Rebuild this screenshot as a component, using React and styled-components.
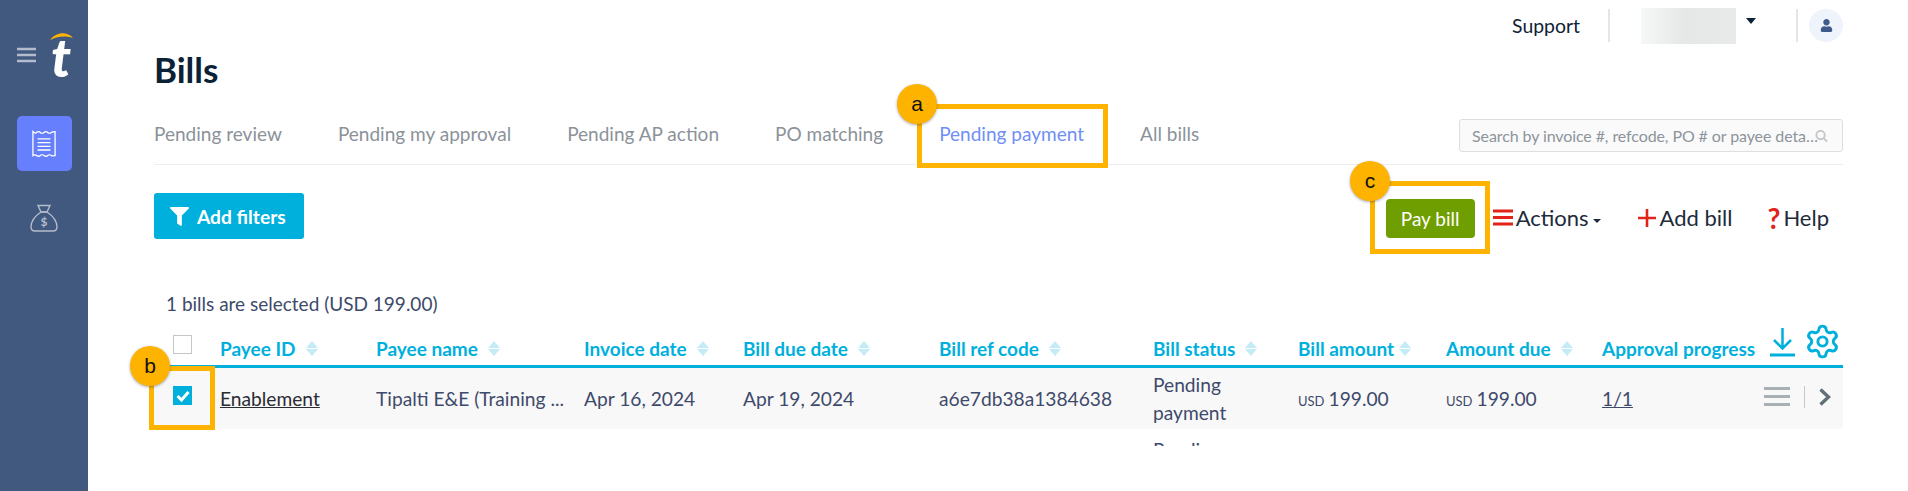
import React from 'react';
import styled, { createGlobalStyle } from 'styled-components';
import { Settings } from 'lucide-react';
import { FaFilter, FaUser } from 'react-icons/fa';

const GlobalStyle = createGlobalStyle`
  html, body {
    margin: 0;
    padding: 0;
    background: #fff;
    font-family: Lato, "Liberation Sans", sans-serif;
  }
`;

const Page = styled.div`
  position: relative;
  display: flex;
  width: 1908px;
  height: 491px;
  overflow: hidden;
`;

const Sidebar = styled.aside`
  flex: 0 0 88px;
  display: flex;
  flex-direction: column;
  align-items: center;
  background: #41587f;
`;

const Brand = styled.div`
  display: flex;
  align-items: center;
  gap: 14px;
  height: 44px;
  margin-top: 33px;
  margin-left: 5px;
`;

const NavButton = styled.div`
  display: flex;
  align-items: center;
  justify-content: center;
  width: 55px;
  height: 55px;
  margin-top: ${(p) => p.$top}px;
  border-radius: 5px;
  background: ${(p) => (p.$active ? '#667ffc' : 'transparent')};
`;

const Main = styled.main`
  flex: 1;
  min-width: 0;
  padding: 0 65px 0 66px;
`;

const TopBar = styled.div`
  display: flex;
  align-items: center;
  justify-content: flex-end;
  height: 33px;
  padding-top: 9px;
`;

const SupportLink = styled.span`
  margin-right: 28px;
  margin-top: -1px;
  font-size: 19.4px;
  color: #0e2236;
`;

const TopDivider = styled.div`
  width: 2px;
  height: 33px;
  background: #e3e5e8;
`;

const AccountBlur = styled.div`
  width: 95px;
  height: 36px;
  margin-left: 31px;
  background: linear-gradient(90deg, #f6f7f7, #e6e8e8 45%, #e8eaea);
`;

const Caret = styled.div`
  width: 0;
  height: 0;
  margin: -9px 40px 0 10px;
  border-left: 5px solid transparent;
  border-right: 5px solid transparent;
  border-top: 6px solid #0e2236;
`;

const Avatar = styled.div`
  display: flex;
  align-items: center;
  justify-content: center;
  width: 34px;
  height: 33px;
  margin-left: 11px;
  border-radius: 50%;
  background: #eef3fc;
  color: #3f5a8a;
  font-size: 13px;
`;

const Title = styled.h1`
  margin: 7px 0 0;
  font-size: 35px;
  line-height: 40px;
  font-weight: 700;
  color: #0b2135;
`;

const TabRow = styled.div`
  display: flex;
  align-items: center;
  gap: 56px;
  height: 75px;
  border-bottom: 1px solid #eceef0;
`;

const Tab = styled.span`
  font-size: 19.05px;
  margin-top: 14px;
  color: ${(p) => (p.$active ? '#6f8ff5' : '#8b9299')};
`;

const Search = styled.div`
  display: flex;
  align-items: center;
  box-sizing: border-box;
  width: 384px;
  height: 33px;
  margin-left: auto;
  margin-top: 18px;
  padding: 0 14px 0 12px;
  border: 1px solid #dcdfe2;
  border-radius: 3px;
  background: #fafafa;
  font-size: 16px;
  color: #8d949b;
`;

const SearchText = styled.span`
  flex: 0 0 346px;
  margin-right: -3px;
  white-space: nowrap;
  overflow: hidden;
  text-overflow: ellipsis;
  letter-spacing: -0.1px;
`;

const Toolbar = styled.div`
  display: flex;
  align-items: center;
  height: 46px;
  margin-top: 28px;
  padding-right: 14px;
`;

const FilterButton = styled.div`
  display: flex;
  align-items: center;
  gap: 8px;
  box-sizing: border-box;
  width: 150px;
  height: 46px;
  padding-left: 16px;
  border-radius: 3px;
  background: #00b0dc;
  color: #fff;
  font-size: 19.2px;
  font-weight: 700;
`;

const PayButton = styled.div`
  display: flex;
  align-items: center;
  justify-content: center;
  width: 89px;
  height: 39px;
  margin-left: auto;
  margin-top: 5px;
  border-radius: 4px;
  background: #6f9e00;
  color: #fff;
  font-size: 19px;
`;

const ToolAction = styled.div`
  display: flex;
  align-items: center;
  margin-left: ${(p) => p.$gap}px;
  margin-top: 3px;
  font-size: 22px;
  color: #1d2b3a;
`;

const RedMark = styled.span`
  margin-right: 3px;
  font-size: 28px;
  line-height: 20px;
  font-weight: 700;
  color: #e2231a;
`;

const SmallCaret = styled.span`
  width: 0;
  height: 0;
  margin: 6px 0 0 4px;
  border-left: 4px solid transparent;
  border-right: 4px solid transparent;
  border-top: 4px solid #1d2b3a;
`;

const SelectedNote = styled.div`
  margin: 53px 0 0 12px;
  font-size: 19px;
  line-height: 24px;
  color: #3e4a6b;
`;

const Row = styled.div`
  display: grid;
  grid-template-columns: 66px 156px 208px 159px 196px 214px 145px 148px 156px 240px;
  align-items: center;
  background: ${(p) => p.$bg || 'transparent'};
  border-radius: ${(p) => (p.$bg ? '0 0 4px 0' : '0')};
`;

const HeadRow = styled(Row)`
  height: 33px;
  margin-top: 16px;
  border-bottom: 3px solid #00b0dc;
`;

const TableClip = styled.div`
  height: 78px;
  overflow: hidden;
`;

const BodyRow = styled(Row)`
  height: 61px;
  font-size: 19.2px;
  color: #3e4a6b;
`;

const NextRow = styled(Row)`
  padding-top: 4px;
  font-size: 19.2px;
  line-height: 34px;
  color: #3e4a6b;
`;

const HeadCell = styled.div`
  display: flex;
  align-items: center;
  gap: ${(p) => p.$gap || 10}px;
  font-size: 19px;
  font-weight: 700;
  color: #00b0dc;
  white-space: nowrap;
`;

const SortArrows = styled.span`
  display: inline-flex;
  flex-direction: column;
  gap: 1px;
  &::before,
  &::after {
    content: '';
    width: 0;
    height: 0;
    border-left: 6px solid transparent;
    border-right: 6px solid transparent;
  }
  &::before {
    border-bottom: 7px solid #c4ecf7;
  }
  &::after {
    border-top: 7px solid #c4ecf7;
  }
`;

const CheckCell = styled.div`
  padding-left: 19px;
  margin-top: ${(p) => p.$lift}px;
`;

const Checkbox = styled.div`
  display: flex;
  align-items: center;
  justify-content: center;
  box-sizing: border-box;
  width: 19px;
  height: 19px;
  border: ${(p) => (p.$checked ? 'none' : '1px solid #c6c6c6')};
  background: ${(p) => (p.$checked ? '#00b0dc' : '#fff')};
`;

const UnderlinedLink = styled.span`
  text-decoration: underline;
  color: ${(p) => p.$color};
`;

const Cell = styled.div`
  white-space: nowrap;
`;

const StatusCell = styled.div`
  line-height: 28px;
`;

const Currency = styled.span`
  margin-right: 4px;
  font-size: 13px;
`;

const HeadLast = styled.div`
  display: flex;
  align-items: center;
  justify-content: space-between;
`;

const HeadTools = styled.div`
  display: flex;
  align-items: center;
  gap: 9px;
  align-self: flex-start;
  margin-top: -14px;
  padding-right: 1px;
  color: #00b0dc;
`;

const RowTools = styled.div`
  display: flex;
  align-items: center;
  margin-top: -4px;
  padding-right: 11px;
`;

const GrayBars = styled.div`
  width: 26px;
  height: 19px;
  margin-right: 14px;
  background: repeating-linear-gradient(#a7b1b3 0 3px, transparent 3px 8px);
`;

const RowSep = styled.div`
  width: 1px;
  height: 22px;
  margin-right: 13px;
  background: #c5c9cb;
`;

const CalloutBox = styled.div`
  position: absolute;
  left: ${(p) => p.$x}px;
  top: ${(p) => p.$y}px;
  box-sizing: border-box;
  width: ${(p) => p.$w}px;
  height: ${(p) => p.$h}px;
  border: 5px solid #fdb300;
`;

const CalloutBadge = styled.div`
  position: absolute;
  left: ${(p) => p.$x}px;
  top: ${(p) => p.$y}px;
  display: flex;
  align-items: center;
  justify-content: center;
  width: 40px;
  height: 40px;
  border-radius: 50%;
  background: #fdb300;
  box-shadow: 0 1px 3px rgba(0, 0, 0, 0.35);
  font-family: "Liberation Sans", sans-serif;
  font-size: 21px;
  color: #111;
`;

const Logo = () => (
  <svg width="26" height="44" viewBox="0 0 26 44" overflow="visible">
    <path d="M0 7 C6 -1 17 -2 23 5 C16 2.6 8 3 0 7Z" fill="#fdb300" />
    <text x="1" y="44" fontFamily="Lato" fontStyle="italic" fontWeight="900" fontSize="54" fill="#fff">t</text>
  </svg>
);

const MenuIcon = () => (
  <svg width="19" height="16" viewBox="0 0 19 16" stroke="#b4bccb" strokeWidth="2.4">
    <path d="M0 2h19M0 8h19M0 14h19" />
  </svg>
);

const ReceiptIcon = () => (
  <svg width="24" height="28" viewBox="0 0 26 29" fill="none" stroke="#fff" strokeWidth="1.4">
    <path d="M1 1c2 2 3 2 4 1s3-1 4 0 3 1 4 0 3-1 4 0 3 1 4 0 3-1 4-1v26c-1 0-3 1-4 0s-3-1-4 0-3 1-4 0-3-1-4 0-3 1-4 0-3-1-4 0Z" />
    <path d="M6 9h14M6 13h14M6 17h14M6 21h14" />
  </svg>
);

const MoneyBagIcon = () => (
  <svg width="28" height="28" viewBox="0 0 28 28" fill="none" stroke="#b4bccb" strokeWidth="1.4">
    <path d="M8 1.5h12l-3 6.5h-6Z" />
    <path d="M11 8C5 12 1 18 1 23c0 3 2 4 4 4h18c2 0 4-1 4-4 0-5-4-11-10-15Z" />
    <text x="14" y="22" textAnchor="middle" fontFamily="Lato" fontWeight="700" fontSize="12" fill="#b4bccb" stroke="none">$</text>
  </svg>
);

const SearchIcon = () => (
  <svg width="14" height="14" viewBox="0 0 14 14" fill="none" stroke="#c4c6c8" strokeWidth="2">
    <circle cx="6" cy="6" r="4.5" />
    <path d="M9.5 9.5 13 13" />
  </svg>
);

const ActionsIcon = () => (
  <svg width="20" height="17" viewBox="0 0 20 17" stroke="#e2231a" strokeWidth="3" style={{ marginRight: 3 }}>
    <path d="M0 2h20M0 8.5h20M0 15h20" />
  </svg>
);

const PlusIcon = () => (
  <svg width="18" height="18" viewBox="0 0 18 18" stroke="#e2231a" strokeWidth="2.6" style={{ marginRight: 4 }}>
    <path d="M0 9h18M9 0v18" />
  </svg>
);

const DownloadIcon = () => (
  <svg width="25" height="30" viewBox="0 0 25 30" fill="none" stroke="#00b0dc" strokeWidth="2.5">
    <path d="M12.5 1v20M4 13l8.5 8.5L21 13" />
    <path d="M0 28h25" strokeWidth="3" />
  </svg>
);

const TickIcon = () => (
  <svg width="14" height="12" viewBox="0 0 14 12" fill="none" stroke="#fff" strokeWidth="3">
    <path d="M1.5 6l4 4 7-8" />
  </svg>
);

const ChevronIcon = () => (
  <svg width="13" height="18" viewBox="0 0 13 18" fill="none" stroke="#5f7078" strokeWidth="3.4">
    <path d="M2.5 1.5 10.5 9l-8 7.5" />
  </svg>
);

const columns = [
  'Payee ID',
  'Payee name',
  'Invoice date',
  'Bill due date',
  'Bill ref code',
  'Bill status',
];

const tabs = [
  'Pending review',
  'Pending my approval',
  'Pending AP action',
  'PO matching',
  'Pending payment',
  'All bills',
];

const App = () => (
  <Page>
    <GlobalStyle />
    <Sidebar>
      <Brand>
        <MenuIcon />
        <Logo />
      </Brand>
      <NavButton $active $top={39}>
        <ReceiptIcon />
      </NavButton>
      <NavButton $top={19}>
        <MoneyBagIcon />
      </NavButton>
    </Sidebar>
    <Main>
      <TopBar>
        <SupportLink>Support</SupportLink>
        <TopDivider />
        <AccountBlur />
        <Caret />
        <TopDivider />
        <Avatar>
          <FaUser />
        </Avatar>
      </TopBar>
      <Title>Bills</Title>
      <TabRow>
        {tabs.map((t) => (
          <Tab key={t} $active={t === 'Pending payment'}>
            {t}
          </Tab>
        ))}
        <Search>
          <SearchText>Search by invoice #, refcode, PO # or payee details</SearchText>
          <SearchIcon />
        </Search>
      </TabRow>
      <Toolbar>
        <FilterButton>
          <FaFilter size={19} />
          Add filters
        </FilterButton>
        <PayButton>Pay bill</PayButton>
        <ToolAction $gap={18}>
          <ActionsIcon />
          Actions
          <SmallCaret />
        </ToolAction>
        <ToolAction $gap={37}>
          <PlusIcon />
          Add bill
        </ToolAction>
        <ToolAction $gap={35}>
          <RedMark>?</RedMark>
          Help
        </ToolAction>
      </Toolbar>
      <SelectedNote>1 bills are selected (USD 199.00)</SelectedNote>
      <HeadRow>
        <CheckCell $lift={-8}>
          <Checkbox />
        </CheckCell>
        {columns.map((c) => (
          <HeadCell key={c}>
            {c}
            <SortArrows />
          </HeadCell>
        ))}
        <HeadCell $gap={5}>
          Bill amount
          <SortArrows />
        </HeadCell>
        <HeadCell>
          Amount due
          <SortArrows />
        </HeadCell>
        <HeadLast>
          <HeadCell>Approval progress</HeadCell>
          <HeadTools>
            <DownloadIcon />
            <Settings size={37} strokeWidth={1.9} />
          </HeadTools>
        </HeadLast>
      </HeadRow>
      <TableClip>
        <BodyRow $bg="#f8f8f8">
          <CheckCell $lift={-6}>
            <Checkbox $checked>
              <TickIcon />
            </Checkbox>
          </CheckCell>
          <Cell>
            <UnderlinedLink $color="#2b2b33">Enablement</UnderlinedLink>
          </Cell>
          <Cell>Tipalti E&amp;E (Training ...</Cell>
          <Cell>Apr 16, 2024</Cell>
          <Cell>Apr 19, 2024</Cell>
          <Cell>a6e7db38a1384638</Cell>
          <StatusCell>
            Pending
            <br />
            payment
          </StatusCell>
          <Cell>
            <Currency>USD</Currency>199.00
          </Cell>
          <Cell>
            <Currency>USD</Currency>199.00
          </Cell>
          <HeadLast>
            <UnderlinedLink $color="#3e4a6b">1/1</UnderlinedLink>
            <RowTools>
              <GrayBars />
              <RowSep />
              <ChevronIcon />
            </RowTools>
          </HeadLast>
        </BodyRow>
        <NextRow>
          <span />
          <span />
          <span />
          <span />
          <span />
          <span />
          <Cell>Pending</Cell>
        </NextRow>
      </TableClip>
    </Main>
    <CalloutBox $x={917} $y={104} $w={191} $h={64} />
    <CalloutBadge $x={897} $y={84}>a</CalloutBadge>
    <CalloutBox $x={149} $y={366} $w={66} $h={64} />
    <CalloutBadge $x={130} $y={346}>b</CalloutBadge>
    <CalloutBox $x={1370} $y={181} $w={120} $h={73} />
    <CalloutBadge $x={1350} $y={161}>c</CalloutBadge>
  </Page>
);

export default App;
